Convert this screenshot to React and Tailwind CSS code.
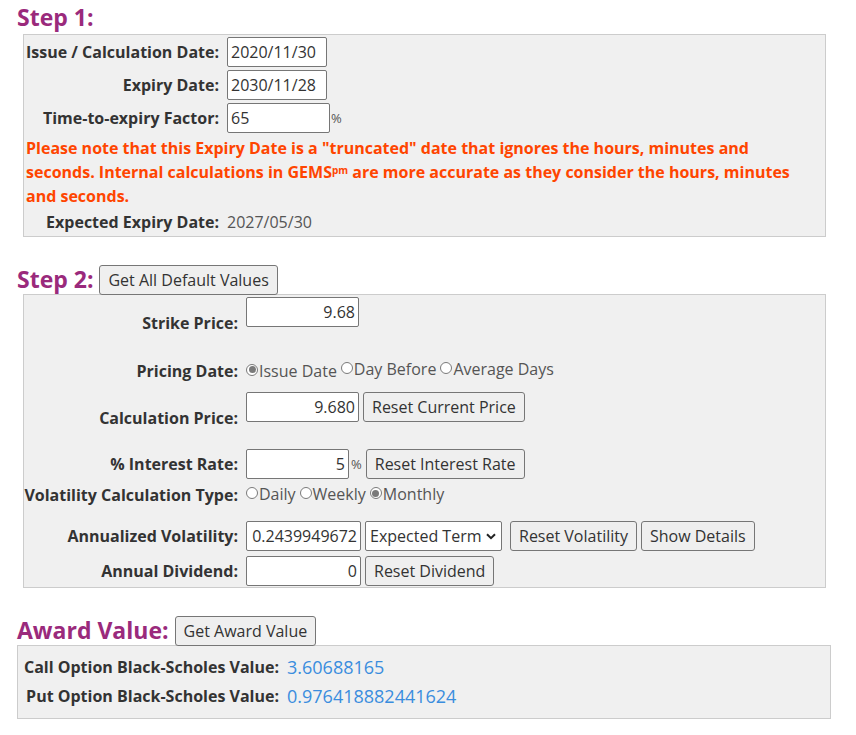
import { useState } from 'react';

const purple = 'text-[#9a2a7c]';
const inputCls = 'h-[30px] border border-[#767676] rounded-[2px] bg-white px-[3px] text-[16px] text-[#333] outline-none';
const btnCls = 'h-[30px] border border-[#767676] rounded-[3px] bg-[#efefef] px-[8px] text-[16px] text-[#333] whitespace-nowrap';

function Radio({ checked, label }) {
  return (
    <span className="inline-flex items-center">
      <span className="w-[12px] h-[12px] rounded-full border border-[#7a7a7a] bg-white flex items-center justify-center mt-[-2px]">
        {checked && <span className="w-[7px] h-[7px] rounded-full bg-[#7a7a7a]" />}
      </span>
      <span className="ml-[1px] mr-[4px]">{label}</span>
    </span>
  );
}

function Row1({ label, children }) {
  return (
    <div className="flex items-center">
      <div className="w-[195px] text-right font-bold text-[#333] whitespace-nowrap">{label}</div>
      <div className="ml-[8px] flex items-center">{children}</div>
    </div>
  );
}

function Row2({ label, labelPad, mt, children }) {
  return (
    <div className="flex items-start" style={{ marginTop: mt }}>
      <div className="w-[214px] text-right font-bold text-[#333] whitespace-nowrap leading-[22px]" style={{ paddingTop: labelPad }}>{label}</div>
      <div className="ml-[8px] flex items-center gap-[4px]">{children}</div>
    </div>
  );
}

export default function App() {
  const [pricing, setPricing] = useState('issue');

  return (
    <div className="font-['Open_Sans',sans-serif] text-[16px] text-[#333] bg-white min-h-screen pl-[17px] leading-[22px]">
      <div className="h-[34px] flex items-center">
        <h2 className={`text-[23px] font-bold ${purple} leading-none`}>Step 1:</h2>
      </div>
      <div className="ml-[6px] w-[803px] h-[203px] border border-[#cccccc] bg-[#f0f0f0] pt-[2px] flex flex-col">
        <div className="flex flex-col gap-[3px]">
          <Row1 label="Issue / Calculation Date:">
            <input readOnly value="2020/11/30" className={`${inputCls} w-[100px]`} />
          </Row1>
          <Row1 label="Expiry Date:">
            <input readOnly value="2030/11/28" className={`${inputCls} w-[100px]`} />
          </Row1>
          <Row1 label="Time-to-expiry Factor:">
            <input readOnly value="65" className={`${inputCls} w-[103px]`} />
            <span className="text-[13px] text-[#555] ml-[1px]">%</span>
          </Row1>
        </div>
        <p className="mt-[3px] pl-[2px] font-bold text-[#ff4500] leading-[24px] whitespace-nowrap">
          Please note that this Expiry Date is a "truncated" date that ignores the hours, minutes and<br />
          seconds. Internal calculations in GEMS<span className="text-[10px] leading-none font-bold align-[4px]">pm</span> are more accurate as they consider the hours, minutes<br />
          and seconds.
        </p>
        <div className="mt-[3px]">
          <Row1 label="Expected Expiry Date:">
            <span className="text-[#555]">2027/05/30</span>
          </Row1>
        </div>
      </div>

      <div className="mt-[28px] h-[29px] flex items-center gap-[6px]">
        <h2 className={`text-[23px] font-bold ${purple} leading-none`}>Step 2:</h2>
        <button className={`${btnCls} h-[29px]`}>Get All Default Values</button>
      </div>
      <div className="ml-[6px] w-[803px] h-[294px] border border-[#cccccc] bg-[#f0f0f0] flex flex-col">
        <Row2 label="Strike Price:" labelPad={15} mt={2}>
          <input readOnly value="9.68" className={`${inputCls} w-[113px] text-right`} />
        </Row2>
        <Row2 label="Pricing Date:" labelPad={4} mt={22}>
          <div className="flex items-center text-[#555]">
            <span onClick={() => setPricing('issue')}><Radio checked={pricing === 'issue'} label="Issue Date" /></span>
            <span onClick={() => setPricing('day')}><Radio checked={pricing === 'day'} label="Day Before" /></span>
            <span onClick={() => setPricing('avg')}><Radio checked={pricing === 'avg'} label="Average Days" /></span>
          </div>
        </Row2>
        <Row2 label="Calculation Price:" labelPad={15} mt={10}>
          <input readOnly value="9.680" className={`${inputCls} w-[113px] text-right`} />
          <button className={btnCls}>Reset Current Price</button>
        </Row2>
        <Row2 label="% Interest Rate:" labelPad={4} mt={20}>
          <input readOnly value="5" className={`${inputCls} w-[103px] text-right`} />
          <span className="text-[13px] text-[#555] -ml-[2px]">%</span>
          <button className={btnCls}>Reset Interest Rate</button>
        </Row2>
        <Row2 label="Volatility Calculation Type:" labelPad={1} mt={4}>
          <div className="flex items-center text-[#555]">
            <Radio label="Daily" />
            <Radio label="Weekly" />
            <Radio checked label="Monthly" />
          </div>
        </Row2>
        <Row2 label="Annualized Volatility:" labelPad={4} mt={15}>
          <input readOnly value="0.2439949672" className={`${inputCls} w-[115px] text-right`} />
          <div className={`${inputCls} w-[137px] flex items-center justify-between pl-[4px] pr-[5px] cursor-default`}>
            <span className="whitespace-nowrap">Expected Term</span>
            <svg width="10" height="7" viewBox="0 0 10 7" className="mt-[1px]">
              <path d="M1 1.2 L5 5.2 L9 1.2" fill="none" stroke="#222" strokeWidth="2" />
            </svg>
          </div>
          <button className={`${btnCls} ml-[4px]`}>Reset Volatility</button>
          <button className={btnCls}>Show Details</button>
        </Row2>
        <Row2 label="Annual Dividend:" labelPad={4} mt={5}>
          <input readOnly value="0" className={`${inputCls} w-[115px] text-right`} />
          <button className={btnCls}>Reset Dividend</button>
        </Row2>
      </div>

      <div className="mt-[28px] h-[29px] flex items-center gap-[6px]">
        <h2 className={`text-[23px] font-bold ${purple} leading-none`}>Award Value:</h2>
        <button className={`${btnCls} h-[29px]`}>Get Award Value</button>
      </div>
      <div className="w-[814px] h-[74px] border border-[#cccccc] bg-[#f0f0f0] pt-[10px] flex flex-col gap-[7px]">
        <div className="flex items-center">
          <div className="w-[261px] text-right font-bold text-[#333]">Call Option Black-Scholes Value:</div>
          <div className="ml-[8px] text-[18px] text-[#3a8dde]">3.60688165</div>
        </div>
        <div className="flex items-center">
          <div className="w-[261px] text-right font-bold text-[#333]">Put Option Black-Scholes Value:</div>
          <div className="ml-[8px] text-[18px] text-[#3a8dde]">0.976418882441624</div>
        </div>
      </div>
    </div>
  );
}
